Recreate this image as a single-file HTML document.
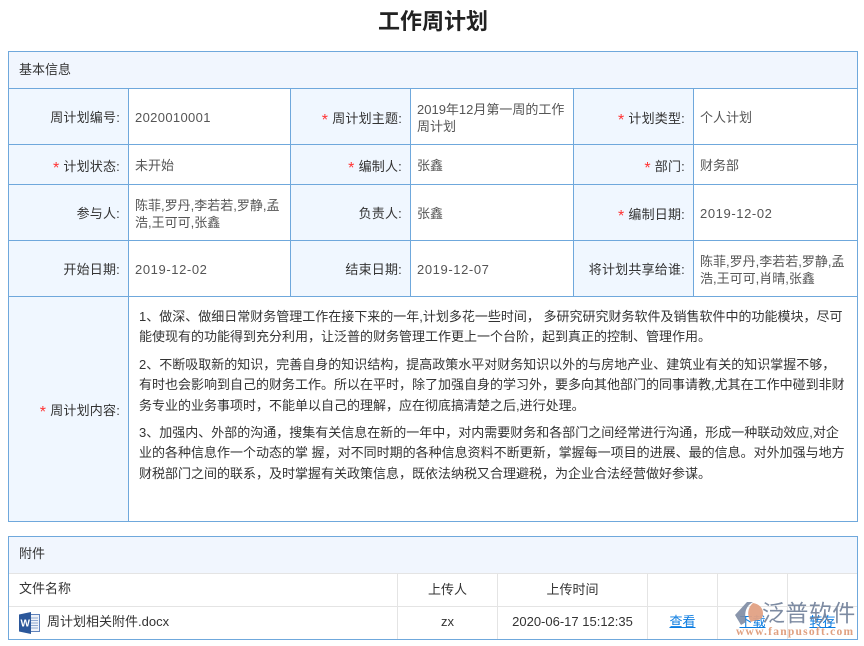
<!DOCTYPE html>
<html lang="zh-CN">
<head>
<meta charset="utf-8">
<title>工作周计划</title>
<style>
html,body{margin:0;padding:0;background:#fff}
#p{position:relative;width:864px;height:646px;overflow:hidden;background:#fff;font-family:"Liberation Sans","Noto Sans CJK SC",sans-serif;font-size:13px;color:#333}
#p div{position:absolute;white-space:nowrap}
.bg{background:#f0f7ff}
.hb{background:#f1f6fe}
.h{height:1px;background:#6fa8dc}
.v{width:1px;background:#6fa8dc}
.gh{height:1px;background:#e4e4e4}
.gv{width:1px;background:#e4e4e4}
.l{text-align:right;color:#333;line-height:20px;height:20px;margin-top:1px;letter-spacing:.2px}
.l b{font-weight:normal;color:#f33;margin-right:4px;font-size:16px;line-height:0;position:relative;top:2px}
.t{color:#555;line-height:20px;height:20px;margin-top:1px}
.t2{color:#555;line-height:17px;height:34px;margin-top:1px}
.c{color:#333;line-height:20px;height:20px;left:139px;margin-top:1px}
.tc{text-align:center;line-height:20px;height:20px;color:#333;margin-top:1px}
.a{text-align:center;line-height:20px;height:20px;color:#0a7be0;text-decoration:underline;margin-top:1px}
.d{letter-spacing:.6px}
</style>
</head>
<body>
<div id="p">
<div style="left:0;top:6px;width:866px;text-align:center;font-size:22px;font-weight:bold;color:#222;line-height:32px;height:32px">工作周计划</div>

<div class="hb" style="left:9px;top:52px;width:848px;height:36px"></div>
<div class="bg" style="left:9px;top:89px;width:119px;height:207px"></div>
<div class="bg" style="left:291px;top:89px;width:119px;height:207px"></div>
<div class="bg" style="left:574px;top:89px;width:119px;height:207px"></div>
<div class="bg" style="left:9px;top:297px;width:119px;height:224px"></div>

<div class="h" style="left:8px;top:51px;width:850px"></div>
<div class="h" style="left:8px;top:88px;width:850px"></div>
<div class="h" style="left:8px;top:144px;width:850px"></div>
<div class="h" style="left:8px;top:184px;width:850px"></div>
<div class="h" style="left:8px;top:240px;width:850px"></div>
<div class="h" style="left:8px;top:296px;width:850px"></div>
<div class="h" style="left:8px;top:521px;width:850px"></div>
<div class="v" style="left:8px;top:51px;height:471px"></div>
<div class="v" style="left:857px;top:51px;height:471px"></div>
<div class="v" style="left:128px;top:88px;height:433px"></div>
<div class="v" style="left:290px;top:88px;height:208px"></div>
<div class="v" style="left:410px;top:88px;height:208px"></div>
<div class="v" style="left:573px;top:88px;height:208px"></div>
<div class="v" style="left:693px;top:88px;height:208px"></div>

<div class="tc" style="left:19px;top:59px;color:#333">基本信息</div>

<div class="l" style="left:9px;width:111px;top:107px">周计划编号:</div>
<div class="t" style="left:135px;top:107px;letter-spacing:.35px">2020010001</div>
<div class="l" style="left:291px;width:111px;top:108px"><b>*</b>周计划主题:</div>
<div class="t2" style="left:417px;top:100px">2019年12月第一周的工作<br>周计划</div>
<div class="l" style="left:574px;width:111px;top:108px"><b>*</b>计划类型:</div>
<div class="t" style="left:700px;top:107px">个人计划</div>

<div class="l" style="left:9px;width:111px;top:156px"><b>*</b>计划状态:</div>
<div class="t" style="left:135px;top:155px">未开始</div>
<div class="l" style="left:291px;width:111px;top:156px"><b>*</b>编制人:</div>
<div class="t" style="left:417px;top:155px">张鑫</div>
<div class="l" style="left:574px;width:111px;top:156px"><b>*</b>部门:</div>
<div class="t" style="left:700px;top:155px">财务部</div>

<div class="l" style="left:9px;width:111px;top:203px">参与人:</div>
<div class="t2" style="left:135px;top:196px">陈菲,罗丹,李若若,罗静,孟<br>浩,王可可,张鑫</div>
<div class="l" style="left:291px;width:111px;top:203px">负责人:</div>
<div class="t" style="left:417px;top:203px">张鑫</div>
<div class="l" style="left:574px;width:111px;top:204px"><b>*</b>编制日期:</div>
<div class="t d" style="left:700px;top:203px">2019-12-02</div>

<div class="l" style="left:9px;width:111px;top:259px">开始日期:</div>
<div class="t d" style="left:135px;top:259px">2019-12-02</div>
<div class="l" style="left:291px;width:111px;top:259px">结束日期:</div>
<div class="t d" style="left:417px;top:259px">2019-12-07</div>
<div class="l" style="left:574px;width:111px;top:259px">将计划共享给谁:</div>
<div class="t2" style="left:700px;top:252px">陈菲,罗丹,李若若,罗静,孟<br>浩,王可可,肖晴,张鑫</div>

<div class="l" style="left:9px;width:111px;top:400px"><b>*</b>周计划内容:</div>
<div class="c" style="top:306px">1、做深、做细日常财务管理工作在接下来的一年,计划多花一些时间， 多研究研究财务软件及销售软件中的功能模块，尽可</div>
<div class="c" style="top:326px">能使现有的功能得到充分利用，让泛普的财务管理工作更上一个台阶，起到真正的控制、管理作用。</div>
<div class="c" style="top:354px">2、不断吸取新的知识，完善自身的知识结构，提高政策水平对财务知识以外的与房地产业、建筑业有关的知识掌握不够，</div>
<div class="c" style="top:374px">有时也会影响到自己的财务工作。所以在平时，除了加强自身的学习外，要多向其他部门的同事请教,尤其在工作中碰到非财</div>
<div class="c" style="top:395px">务专业的业务事项时，不能单以自己的理解，应在彻底搞清楚之后,进行处理。</div>
<div class="c" style="top:422px">3、加强内、外部的沟通，搜集有关信息在新的一年中，对内需要财务和各部门之间经常进行沟通，形成一种联动效应,对企</div>
<div class="c" style="top:442px">业的各种信息作一个动态的掌 握，对不同时期的各种信息资料不断更新，掌握每一项目的进展、最的信息。对外加强与地方</div>
<div class="c" style="top:463px">财税部门之间的联系，及时掌握有关政策信息，既依法纳税又合理避税，为企业合法经营做好参谋。</div>

<div class="hb" style="left:9px;top:537px;width:848px;height:36px"></div>
<div class="gh" style="left:9px;top:573px;width:848px"></div>
<div class="gh" style="left:9px;top:606px;width:848px"></div>
<div class="gv" style="left:397px;top:574px;height:65px"></div>
<div class="gv" style="left:497px;top:574px;height:65px"></div>
<div class="gv" style="left:647px;top:574px;height:65px"></div>
<div class="gv" style="left:717px;top:574px;height:65px"></div>
<div class="gv" style="left:787px;top:574px;height:65px"></div>
<div class="h" style="left:8px;top:536px;width:850px"></div>
<div class="h" style="left:8px;top:639px;width:850px"></div>
<div class="v" style="left:8px;top:536px;height:104px"></div>
<div class="v" style="left:857px;top:536px;height:104px"></div>

<div class="tc" style="left:19px;top:543px">附件</div>
<div class="tc" style="left:19px;top:578px">文件名称</div>
<div class="tc" style="left:398px;width:99px;top:579px">上传人</div>
<div class="tc" style="left:498px;width:149px;top:579px">上传时间</div>

<svg style="position:absolute;left:19px;top:612px" width="21" height="22" viewBox="0 0 21 22">
<rect x="9" y="2.500" width="11.500" height="17" fill="#eef2f9" stroke="#5f82bb" stroke-width="1"/>
<path d="M12 6h7M12 8.500h7M12 11h7M12 13.500h7M12 16h7" stroke="#8fa8d0" stroke-width="1"/>
<path d="M0 2.500L12 0V22L0 19.500Z" fill="#2b579a"/>
<text x="1.500" y="14.500" font-family="Liberation Sans, sans-serif" font-size="10" font-weight="bold" fill="#fff">W</text>
</svg>
<div class="tc" style="left:47px;top:611px">周计划相关附件.docx</div>
<div class="tc" style="left:398px;width:99px;top:611px">zx</div>
<div class="tc" style="left:498px;width:149px;top:611px">2020-06-17 15:12:35</div>
<div class="a" style="left:648px;width:69px;top:611px">查看</div>
<div class="a" style="left:718px;width:69px;top:611px">下载</div>
<div class="a" style="left:788px;width:69px;top:611px">转存</div>

<svg style="position:absolute;left:734px;top:600px" width="36" height="30" viewBox="0 0 36 30">
<path d="M1 15L13 2H19C12 6 10 12 12 22L7 25Z" fill="#7d8ba3" opacity=".9"/>
<path d="M19 3C27 4 31 11 28 18C25 21 20 20 17 22C13 17 13 8 19 3Z" fill="#e2a184" opacity=".95"/>
</svg>
<div style="left:762px;top:598px;font-size:23px;line-height:30px;height:30px;color:#6f7f99;opacity:.9;letter-spacing:.4px">泛普软件</div>
<div style="left:736px;top:625px;font-family:'Liberation Serif',serif;font-size:11.500px;line-height:14px;height:14px;color:#e0a080;font-weight:bold;letter-spacing:1.250px">www.fanpusoft.com</div>
</div>
</body>
</html>
